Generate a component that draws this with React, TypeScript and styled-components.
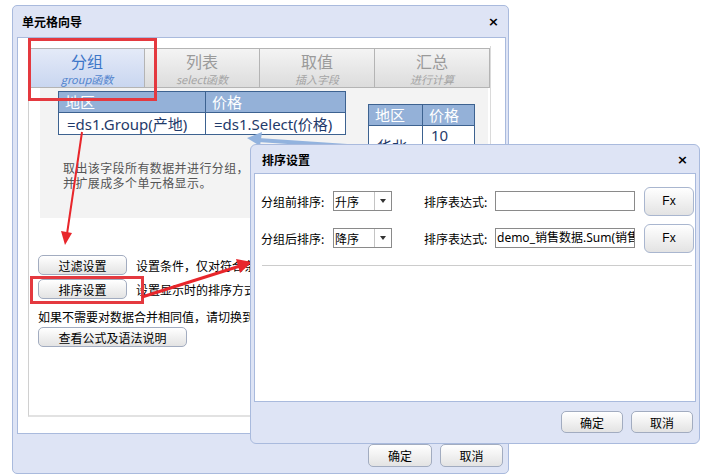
import React from "react";
import styled, { createGlobalStyle } from "styled-components";

// 单元格向导 + 排序设置 弹窗

const GlobalStyle = createGlobalStyle`
  html, body { margin: 0; padding: 0; background: #fff; }
  body {
    font-family: "Noto Sans CJK SC", "Noto Sans", sans-serif;
    font-size: 12px;
    color: #000;
  }
`;

const tabs = [
  { title: "分组", sub: "group函数" },
  { title: "列表", sub: "select函数" },
  { title: "取值", sub: "插入字段" },
  { title: "汇总", sub: "进行计算" },
];

const Stage = styled.div`
  position: relative;
  width: 707px;
  height: 475px;
  overflow: hidden;
  padding: 5px 0 0 12px;
  box-sizing: border-box;
`;

const Window = styled.div`
  width: 497px;
  height: 469px;
  box-sizing: border-box;
  border: 1px solid #a9badd;
  border-radius: 5px;
  background: #dee4f5;
  display: flex;
  flex-direction: column;
`;

const TitleBar = styled.div<{ $h: number; $pl: number; $pr: number }>`
  height: ${({ $h }) => $h}px;
  flex: none;
  display: flex;
  align-items: center;
  justify-content: space-between;
  padding: 0 ${({ $pr }) => $pr}px 0 ${({ $pl }) => $pl}px;
  font-weight: bold;
  font-size: 12px;
`;

const Close = styled.span`
  font-family: "DejaVu Sans", sans-serif;
  font-weight: bold;
  font-size: 13px;
`;

const Body = styled.div`
  margin: 0 2px 0 4px;
  height: 397px;
  flex: none;
  box-sizing: border-box;
  border: 1px solid #a9badd;
  background: #fff;
  padding: 8px 14px 16px 10px;
`;

const Panel = styled.div`
  height: 100%;
  box-sizing: border-box;
  border-left: 1px solid #d0d0d0;
  border-right: 1px solid #dadada;
  border-bottom: 2px solid #e2e2e2;
  padding: 2px 0 0 1px;
`;

const TabRow = styled.div`
  display: flex;
  width: 460px;
  height: 40px;
`;

const Tab = styled.div<{ $active?: boolean }>`
  flex: 1;
  box-sizing: border-box;
  border: 1px solid #b4b4b4;
  border-left: none;
  background: ${({ $active }) =>
    $active
      ? "linear-gradient(#e4eaf8, #c9d6f0)"
      : "linear-gradient(#f4f4f4, #dcdcdc)"};
  display: flex;
  flex-direction: column;
  align-items: center;
  padding-top: 3px;
  color: ${({ $active }) => ($active ? "#3d76c8" : "#9a9a9a")};
`;

const TabTitle = styled.div`
  font-size: 16px;
  line-height: 18px;
`;

const TabSub = styled.div`
  font-size: 11px;
  line-height: 13px;
  margin-top: 3px;
  font-style: italic;
  opacity: 0.85;
`;

const Intro = styled.div`
  margin-left: 10px;
  width: 448px;
  height: 130px;
  background: #f3f3f3;
  display: flex;
  flex-direction: column;
`;

const TablesRow = styled.div`
  display: flex;
  align-items: flex-start;
  height: 64px;
  flex: none;
`;

const Sheet = styled.table<{ $mt: number; $ml: number }>`
  margin: ${({ $mt }) => $mt}px 0 0 ${({ $ml }) => $ml}px;
  border-collapse: collapse;
  background: #fff;
  font-family: "Noto Sans", "Noto Sans CJK SC", sans-serif;
  font-size: 15px;
  line-height: 18px;
  color: #1f3a6a;
`;

const Head = styled.th<{ $w: number }>`
  width: ${({ $w }) => $w}px;
  height: 21px;
  padding: 0 0 0 6px;
  box-sizing: border-box;
  background: #94b1d8;
  color: #fff;
  font-weight: normal;
  text-align: left;
  border: 1px solid #3d6290;
  font-family: "Noto Sans CJK SC", sans-serif;
`;

const Cell = styled.td<{ $h: number; $pt?: number }>`
  height: ${({ $h }) => $h}px;
  padding: ${({ $pt }) => $pt ?? 0}px 0 0 8px;
  box-sizing: border-box;
  vertical-align: ${({ $pt }) => ($pt !== undefined ? "top" : "middle")};
  border: 1px solid #3d6290;
  white-space: nowrap;
`;

const Desc = styled.div`
  margin: 8px 0 0 23px;
  color: #555;
  letter-spacing: 0.4px;
  white-space: nowrap;
`;

const DescLine = styled.div`
  height: 15px;
  line-height: 15px;
`;

const Actions = styled.div`
  margin: 37px 0 0 8px;
  display: flex;
  flex-direction: column;
`;

const ActionRow = styled.div<{ $mt?: number }>`
  display: flex;
  align-items: center;
  gap: 9px;
  margin-top: ${({ $mt }) => $mt ?? 0}px;
  white-space: nowrap;
`;

const Note = styled.div`
  margin-top: 9px;
  line-height: 18px;
  white-space: nowrap;
`;

const Btn = styled.button<{ $w: number; $h?: number }>`
  width: ${({ $w }) => $w}px;
  height: ${({ $h }) => $h ?? 20}px;
  flex: none;
  box-sizing: border-box;
  padding: 0;
  border: 1px solid #a2acc0;
  border-radius: 5px;
  background: linear-gradient(#ffffff, #e3e3e3);
  font-family: "Noto Sans CJK SC", sans-serif;
  font-size: 12px;
  color: #000;
`;

const Footer = styled.div<{ $pt: number; $pr: number }>`
  flex: 1;
  display: flex;
  justify-content: flex-end;
  align-items: flex-start;
  gap: 8px;
  padding: ${({ $pt }) => $pt}px ${({ $pr }) => $pr}px 0 0;
`;

const Overlay = styled.svg`
  position: absolute;
  left: 0;
  top: 0;
  pointer-events: none;
`;

const Dialog = styled.div`
  position: absolute;
  left: 250px;
  top: 144px;
  width: 450px;
  height: 300px;
  box-sizing: border-box;
  border: 1px solid #a9badd;
  border-radius: 6px;
  background: #dee4f5;
  display: flex;
  flex-direction: column;
`;

const DialogBody = styled.div`
  margin: 0 3px;
  height: 229px;
  flex: none;
  box-sizing: border-box;
  border: 1px solid #a9badd;
  background: #fff;
  padding: 12px 0 0 6px;
  display: flex;
  flex-direction: column;
  gap: 7px;
`;

const FormRow = styled.div`
  display: flex;
  align-items: center;
  height: 30px;
`;

const Label = styled.span<{ $w: number; $ml?: number }>`
  width: ${({ $w }) => $w}px;
  margin-left: ${({ $ml }) => $ml ?? 0}px;
  flex: none;
  white-space: nowrap;
`;

const Select = styled.div`
  width: 59px;
  height: 20px;
  box-sizing: border-box;
  border: 1px solid #8a8a8a;
  display: flex;
  align-items: center;
`;

const SelectText = styled.span`
  flex: 1;
  padding-left: 1px;
`;

const Caret = styled.span`
  width: 16px;
  height: 100%;
  border-left: 1px solid #c4c4c4;
  display: flex;
  align-items: center;
  justify-content: center;
  &::after {
    content: "";
    border-left: 3.5px solid transparent;
    border-right: 3.5px solid transparent;
    border-top: 4px solid #333;
  }
`;

const Input = styled.div`
  width: 140px;
  height: 20px;
  box-sizing: border-box;
  border: 1px solid #8a8a8a;
  overflow: hidden;
  white-space: nowrap;
  line-height: 18px;
  padding-left: 1px;
  font-family: "Noto Sans", "Noto Sans CJK SC", sans-serif;
`;

const Fx = styled(Btn)`
  margin-left: 9px;
  border-radius: 6px;
  border-color: #a9b6cf;
  font-family: "Liberation Sans", sans-serif;
`;

const Rule = styled.div`
  height: 1px;
  background: #cccccc;
  margin: 5px 3px 0 1px;
`;

export default function App() {
  return (
    <Stage>
      <GlobalStyle />
      <Window>
        <TitleBar $h={31} $pl={9} $pr={9}>
          <span>单元格向导</span>
          <Close>×</Close>
        </TitleBar>
        <Body>
          <Panel>
            <TabRow>
              {tabs.map((t, i) => (
                <Tab key={t.title} $active={i === 0}>
                  <TabTitle>{t.title}</TabTitle>
                  <TabSub>{t.sub}</TabSub>
                </Tab>
              ))}
            </TabRow>
            <Intro>
              <TablesRow>
                <Sheet $mt={3} $ml={18}>
                  <tbody>
                    <tr>
                      <Head $w={147}>地区</Head>
                      <Head $w={140}>价格</Head>
                    </tr>
                    <tr>
                      <Cell $h={22}>=ds1.Group(产地)</Cell>
                      <Cell $h={22}>=ds1.Select(价格)</Cell>
                    </tr>
                  </tbody>
                </Sheet>
                <Sheet $mt={16} $ml={22}>
                  <tbody>
                    <tr>
                      <Head $w={54}>地区</Head>
                      <Head $w={52}>价格</Head>
                    </tr>
                    <tr>
                      <Cell $h={24} $pt={11}>华北</Cell>
                      <Cell $h={24} $pt={0}>10</Cell>
                    </tr>
                  </tbody>
                </Sheet>
              </TablesRow>
              <Desc>
                <DescLine>取出该字段所有数据并进行分组，</DescLine>
                <DescLine>并扩展成多个单元格显示。</DescLine>
              </Desc>
            </Intro>
            <Actions>
              <ActionRow>
                <Btn $w={89}>过滤设置</Btn>
                <span>设置条件，仅对符合条件的数据进行分组</span>
              </ActionRow>
              <ActionRow $mt={4}>
                <Btn $w={89}>排序设置</Btn>
                <span>设置显示时的排序方式</span>
              </ActionRow>
              <Note>如果不需要对数据合并相同值，请切换到列表</Note>
              <ActionRow $mt={1}>
                <Btn $w={149}>查看公式及语法说明</Btn>
              </ActionRow>
            </Actions>
          </Panel>
        </Body>
        <Footer $pt={10} $pr={5}>
          <Btn $w={64} $h={23}>确定</Btn>
          <Btn $w={63} $h={23}>取消</Btn>
        </Footer>
      </Window>

      <Overlay width={707} height={475} viewBox="0 0 707 475">
        <line x1={258} y1={140} x2={362} y2={147} stroke="#93b3de" strokeWidth={4} />
        <polygon points="247,138 262,132 260,146" fill="#93b3de" />
        <rect x={29.5} y={39.5} width={126} height={60} fill="none" stroke="#e4393f" strokeWidth={3} />
        <rect x={31.5} y={277.5} width={111} height={25} fill="none" stroke="#e4393f" strokeWidth={3} />
        <line x1={82} y1={132} x2={67} y2={234} stroke="#e8262b" strokeWidth={2} />
        <polygon points="61,231 72,233 65,245" fill="#e8262b" />
        <line x1={142} y1={297} x2={240} y2={266} stroke="#e8262b" strokeWidth={3} />
        <polygon points="236,259 252,262 240,273" fill="#e8262b" />
      </Overlay>

      <Dialog>
        <TitleBar $h={28} $pl={11} $pr={11}>
          <span>排序设置</span>
          <Close>×</Close>
        </TitleBar>
        <DialogBody>
          <FormRow>
            <Label $w={72}>分组前排序:</Label>
            <Select>
              <SelectText>升序</SelectText>
              <Caret />
            </Select>
            <Label $w={71} $ml={32}>排序表达式:</Label>
            <Input />
            <Fx $w={50} $h={29}>Fx</Fx>
          </FormRow>
          <FormRow>
            <Label $w={72}>分组后排序:</Label>
            <Select>
              <SelectText>降序</SelectText>
              <Caret />
            </Select>
            <Label $w={71} $ml={32}>排序表达式:</Label>
            <Input>demo_销售数据.Sum(销售额)</Input>
            <Fx $w={50} $h={29}>Fx</Fx>
          </FormRow>
          <Rule />
        </DialogBody>
        <Footer $pt={9} $pr={6}>
          <Btn $w={62} $h={22}>确定</Btn>
          <Btn $w={62} $h={22}>取消</Btn>
        </Footer>
      </Dialog>
    </Stage>
  );
}
